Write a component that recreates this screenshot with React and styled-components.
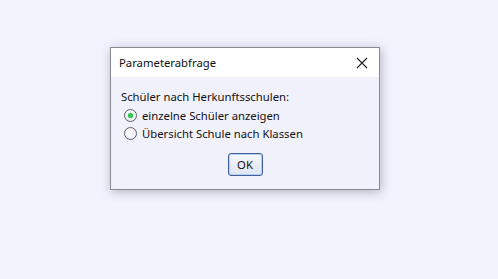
import React from 'react';
import styled, { createGlobalStyle } from 'styled-components';

const GlobalStyle = createGlobalStyle`
  html, body {
    margin: 0;
    background: #f3f3fe;
  }
  body {
    font-family: "Noto Sans", "DejaVu Sans", sans-serif;
    color: #111;
  }
`;

const Page = styled.div`
  width: 498px;
  height: 279px;
  box-sizing: border-box;
  padding: 47px 0 0 110px;
`;

const Dialog = styled.div`
  width: 270px;
  box-sizing: border-box;
  border: 1px solid #8a8a8e;
  background: #f1f1fc;
  box-shadow: 1px 2px 10px rgba(60, 60, 80, 0.35);
`;

const TitleBar = styled.div`
  height: 29px;
  display: flex;
  align-items: center;
  justify-content: space-between;
  background: #ffffff;
  padding: 0 9px 0 8px;
`;

const Title = styled.span`
  font-size: 11.3px;
  color: #111;
`;

const CloseButton = styled.button`
  display: flex;
  align-items: center;
  justify-content: center;
  width: 16px;
  height: 16px;
  padding: 0;
  border: none;
  background: transparent;
`;

const Body = styled.div`
  display: flex;
  flex-direction: column;
  padding: 11px 9px 13px 9px;
`;

const Label = styled.div`
  height: 18px;
  line-height: 18px;
  font-size: 11.3px;
  padding-left: 1px;
`;

const Option = styled.label`
  height: 18px;
  display: flex;
  align-items: center;
  gap: 5px;
  padding-left: 4px;
  font-size: 11.3px;
`;

const Circle = styled.span`
  width: 11px;
  height: 11px;
  border-radius: 50%;
  border: 1px solid #5e5e66;
  background: radial-gradient(circle at 50% 40%, #ffffff 0%, #f2f2f6 60%, #dcdce4 100%);
  display: flex;
  align-items: center;
  justify-content: center;
`;

const Dot = styled.span`
  width: 5px;
  height: 5px;
  border-radius: 50%;
  background: radial-gradient(circle, #44dd60 0%, #20b040 70%, #7cd88c 100%);
  box-shadow: 0 0 1.5px #5cd070;
`;

const Footer = styled.div`
  display: flex;
  justify-content: center;
  margin-top: 11px;
`;

const OkButton = styled.button`
  width: 35px;
  height: 23px;
  box-sizing: border-box;
  border: 1px solid #3e5f9a;
  border-radius: 3px;
  background: linear-gradient(#f4f7fd, #dfe6f3);
  box-shadow: inset 0 0 0 1px #b8cdee;
  font-family: "Noto Sans", "DejaVu Sans", sans-serif;
  font-size: 11.3px;
  color: #111;
  padding: 0;
`;

function Radio({ checked, children }) {
  return (
    <Option>
      <Circle>{checked && <Dot />}</Circle>
      {children}
    </Option>
  );
}

export default function App() {
  return (
    <Page>
      <GlobalStyle />
      <Dialog>
        <TitleBar>
          <Title>Parameterabfrage</Title>
          <CloseButton>
            <svg width="12" height="12" viewBox="0 0 12 12">
              <path d="M1 1 L11 11 M11 1 L1 11" stroke="#222" strokeWidth="1.1" fill="none" />
            </svg>
          </CloseButton>
        </TitleBar>
        <Body>
          <Label>Schüler nach Herkunftsschulen:</Label>
          <Radio checked>einzelne Schüler anzeigen</Radio>
          <Radio>Übersicht Schule nach Klassen</Radio>
          <Footer>
            <OkButton>OK</OkButton>
          </Footer>
        </Body>
      </Dialog>
    </Page>
  );
}
